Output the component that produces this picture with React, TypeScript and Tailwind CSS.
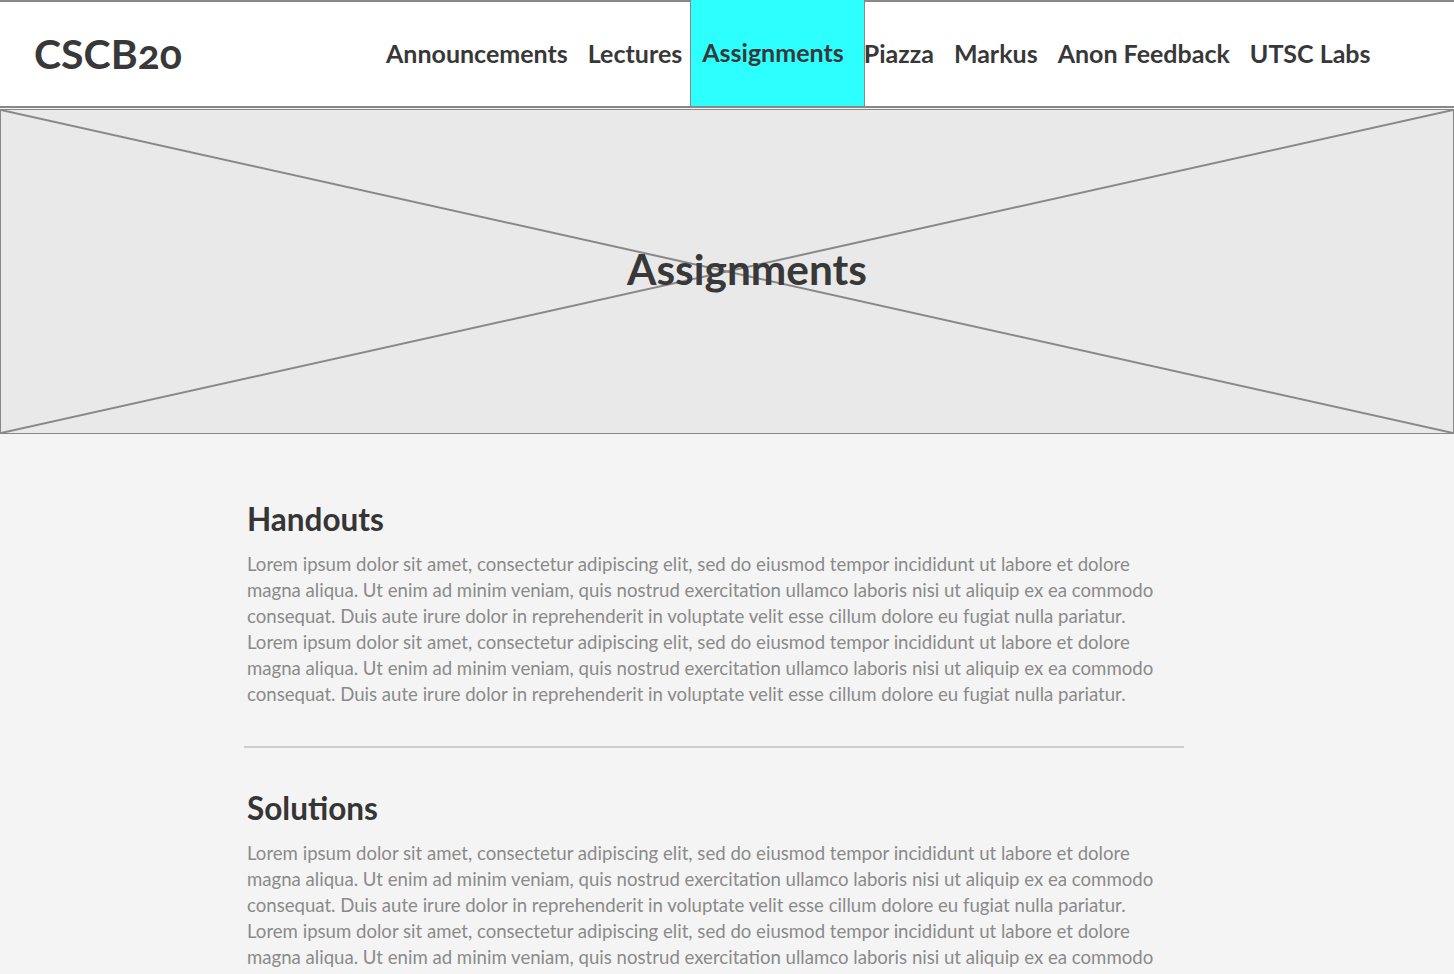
import React from 'react';

const NAV = ['Announcements', 'Lectures', 'Assignments', 'Piazza', 'Markus', 'Anon Feedback', 'UTSC Labs'];
const ACTIVE = 'Assignments';

const LOREM = [
  'Lorem ipsum dolor sit amet, consectetur adipiscing elit, sed do eiusmod tempor incididunt ut labore et dolore',
  'magna aliqua. Ut enim ad minim veniam, quis nostrud exercitation ullamco laboris nisi ut aliquip ex ea commodo',
  'consequat. Duis aute irure dolor in reprehenderit in voluptate velit esse cillum dolore eu fugiat nulla pariatur.',
];

function Section({ title }: { title: string }) {
  const lines = [...LOREM, ...LOREM];
  return (
    <section className="flex flex-col">
      <h2 className="text-[31.5px] font-bold leading-[36px] text-[#353535] pl-[3px]">{title}</h2>
      <p className="mt-[14px] text-[18.6px] leading-[26px] text-[#8a8a8a] pl-[3px] whitespace-nowrap">
        {lines.map((line, i) => (
          <span key={i} className="block">{line}</span>
        ))}
      </p>
    </section>
  );
}

function Header() {
  return (
    <header className="flex items-stretch h-[108px] bg-white border-t-2 border-b-2 border-[#888]">
      <div className="flex items-center pl-[34px] w-[386px]">
        <span className="text-[41px] font-bold text-[#383838] [font-variant-numeric:oldstyle-nums]">CSCB20</span>
      </div>
      <nav className="flex items-stretch gap-5">
        {NAV.map(item =>
          item === ACTIVE ? (
            <a key={item} className="flex items-center self-stretch -mt-[2px] bg-[#2dffff] border-x border-[#888] pl-[11px] pr-[20px] -ml-[12px] -mr-[21px] text-[25px] font-bold text-[#383838]">
              {item}
            </a>
          ) : (
            <a key={item} className="flex items-center text-[25px] font-bold text-[#383838]">{item}</a>
          )
        )}
      </nav>
    </header>
  );
}

function Hero() {
  return (
    <div className="relative mt-px h-[325px] bg-[#e9e9e9] border border-[#888] flex items-center justify-center">
      <svg className="absolute inset-0 w-full h-full" preserveAspectRatio="none" viewBox="0 0 100 100">
        <line x1="0" y1="0" x2="100" y2="100" stroke="#888" strokeWidth="2" vectorEffect="non-scaling-stroke" />
        <line x1="100" y1="0" x2="0" y2="100" stroke="#888" strokeWidth="2" vectorEffect="non-scaling-stroke" />
      </svg>
      <h1 className="relative pl-10 pb-[5px] text-[42.4px] font-bold text-[#383838] leading-none">Assignments</h1>
    </div>
  );
}

export default function App() {
  return (
    <div className="min-h-[974px] bg-[#f4f4f4] [font-family:Lato,sans-serif]">
      <Header />
      <Hero />
      <main className="pl-[244px] pt-[67px] pb-10">
        <div className="w-[940px] flex flex-col">
          <Section title="Handouts" />
          <hr className="mt-[39px] border-0 h-[2px] bg-[#cccccc]" />
          <div className="mt-[42px]">
            <Section title="Solutions" />
          </div>
        </div>
      </main>
    </div>
  );
}
